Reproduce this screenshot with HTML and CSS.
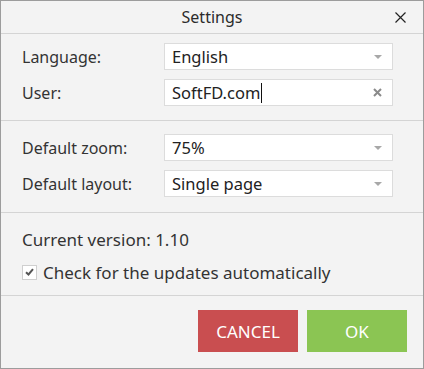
FILE: index.html
```html
<!DOCTYPE html>
<html>
<head>
<meta charset="utf-8">
<link rel="stylesheet" href="styles.css">
</head>
<body>
<div class="window">
  <div class="titlebar">
    <span class="title">Settings</span>
    <span class="close">
      <svg width="11" height="11" viewBox="0 0 11 11"><path d="M0.5 0.5 L10.5 10.5 M10.5 0.5 L0.5 10.5" stroke="#222" stroke-width="1.2" fill="none"/></svg>
    </span>
  </div>
  <div class="section s1">
    <div class="row">
      <span class="label">Language:</span>
      <div class="field select"><span class="value">English</span><span class="arrow"></span></div>
    </div>
    <div class="row">
      <span class="label">User:</span>
      <div class="field input"><span class="value">SoftFD.com<span class="caret"></span></span>
        <svg class="clear" width="9" height="9" viewBox="0 0 9 9"><path d="M1 1 L8 8 M8 1 L1 8" stroke="#8a8a8a" stroke-width="2" fill="none"/></svg>
      </div>
    </div>
  </div>
  <div class="section s2">
    <div class="row">
      <span class="label">Default zoom:</span>
      <div class="field select"><span class="value">75%</span><span class="arrow"></span></div>
    </div>
    <div class="row">
      <span class="label">Default layout:</span>
      <div class="field select"><span class="value">Single page</span><span class="arrow"></span></div>
    </div>
  </div>
  <div class="section s3">
    <div class="version">Current version: 1.10</div>
    <label class="check">
      <span class="box"><svg width="9" height="8" viewBox="0 0 9 8"><path d="M1 4.2 L3.5 6.5 L8 1.2" stroke="#555" stroke-width="2" fill="none"/></svg></span>
      <span>Check for the updates automatically</span>
    </label>
  </div>
  <div class="footer">
    <button class="btn cancel">CANCEL</button>
    <button class="btn ok">OK</button>
  </div>
</div>
</body>
</html>
```
FILE: styles.css
```css
* { box-sizing: border-box; }
html, body { margin: 0; padding: 0; }
body {
  font-family: "Noto Sans", "Open Sans", sans-serif;
  font-size: 16px;
  color: #333;
}
.window {
  width: 424px;
  height: 369px;
  border: 1px solid #9c9c9c;
  background: #f3f3f3;
  display: flex;
  flex-direction: column;
}
.titlebar {
  height: 33px;
  border-bottom: 1px solid #d4d4d4;
  display: flex;
  align-items: center;
  justify-content: center;
  position: relative;
}
.title { font-size: 16px; color: #2b2b2b; }
.close {
  position: absolute;
  right: 17px;
  top: 11px;
  line-height: 0;
}
.section {
  border-bottom: 1px solid #d4d4d4;
  padding: 9px 30px 0 21px;
  display: flex;
  flex-direction: column;
}
.s1 { height: 87px; gap: 9px; }
.s2 { height: 92px; padding-top: 13px; gap: 9px; }
.s3 { height: 83px; padding-top: 15px; gap: 9px; }
.row {
  display: flex;
  align-items: center;
  height: 27px;
}
.label { width: 142px; color: #333; }
.field {
  flex: 1;
  height: 27px;
  background: #fff;
  border: 1px solid #dcdcdc;
  display: flex;
  align-items: center;
  padding: 0 10px 0 7px;
  color: #222;
  font-size: 16.5px;
}
.value { flex: 1; display: flex; align-items: center; }
.arrow {
  width: 0; height: 0;
  border-left: 4px solid transparent;
  border-right: 4px solid transparent;
  border-top: 4px solid #a8a8a8;
}
.caret {
  display: inline-block;
  width: 1px;
  height: 20px;
  background: #111;
  margin-left: 1px;
}
.version { height: 24px; line-height: 24px; font-size: 17px; }
.check {
  display: flex;
  align-items: center;
  gap: 6px;
  height: 22px;
  font-size: 17px;
}
.box {
  width: 15px; height: 15px;
  background: #fff;
  border: 1px solid #cfcfcf;
  display: flex; align-items: center; justify-content: center;
}
.footer {
  flex: 1;
  display: flex;
  justify-content: flex-end;
  align-items: flex-start;
  padding: 14px 16px 0 0;
  gap: 9px;
}
.btn {
  width: 100px;
  height: 42px;
  border: none;
  color: #fff;
  font-family: "Noto Sans", "Open Sans", sans-serif;
  font-size: 17px;
  padding: 0;
}
.cancel { background: #c94e50; }
.ok { background: #8bc553; }
```
